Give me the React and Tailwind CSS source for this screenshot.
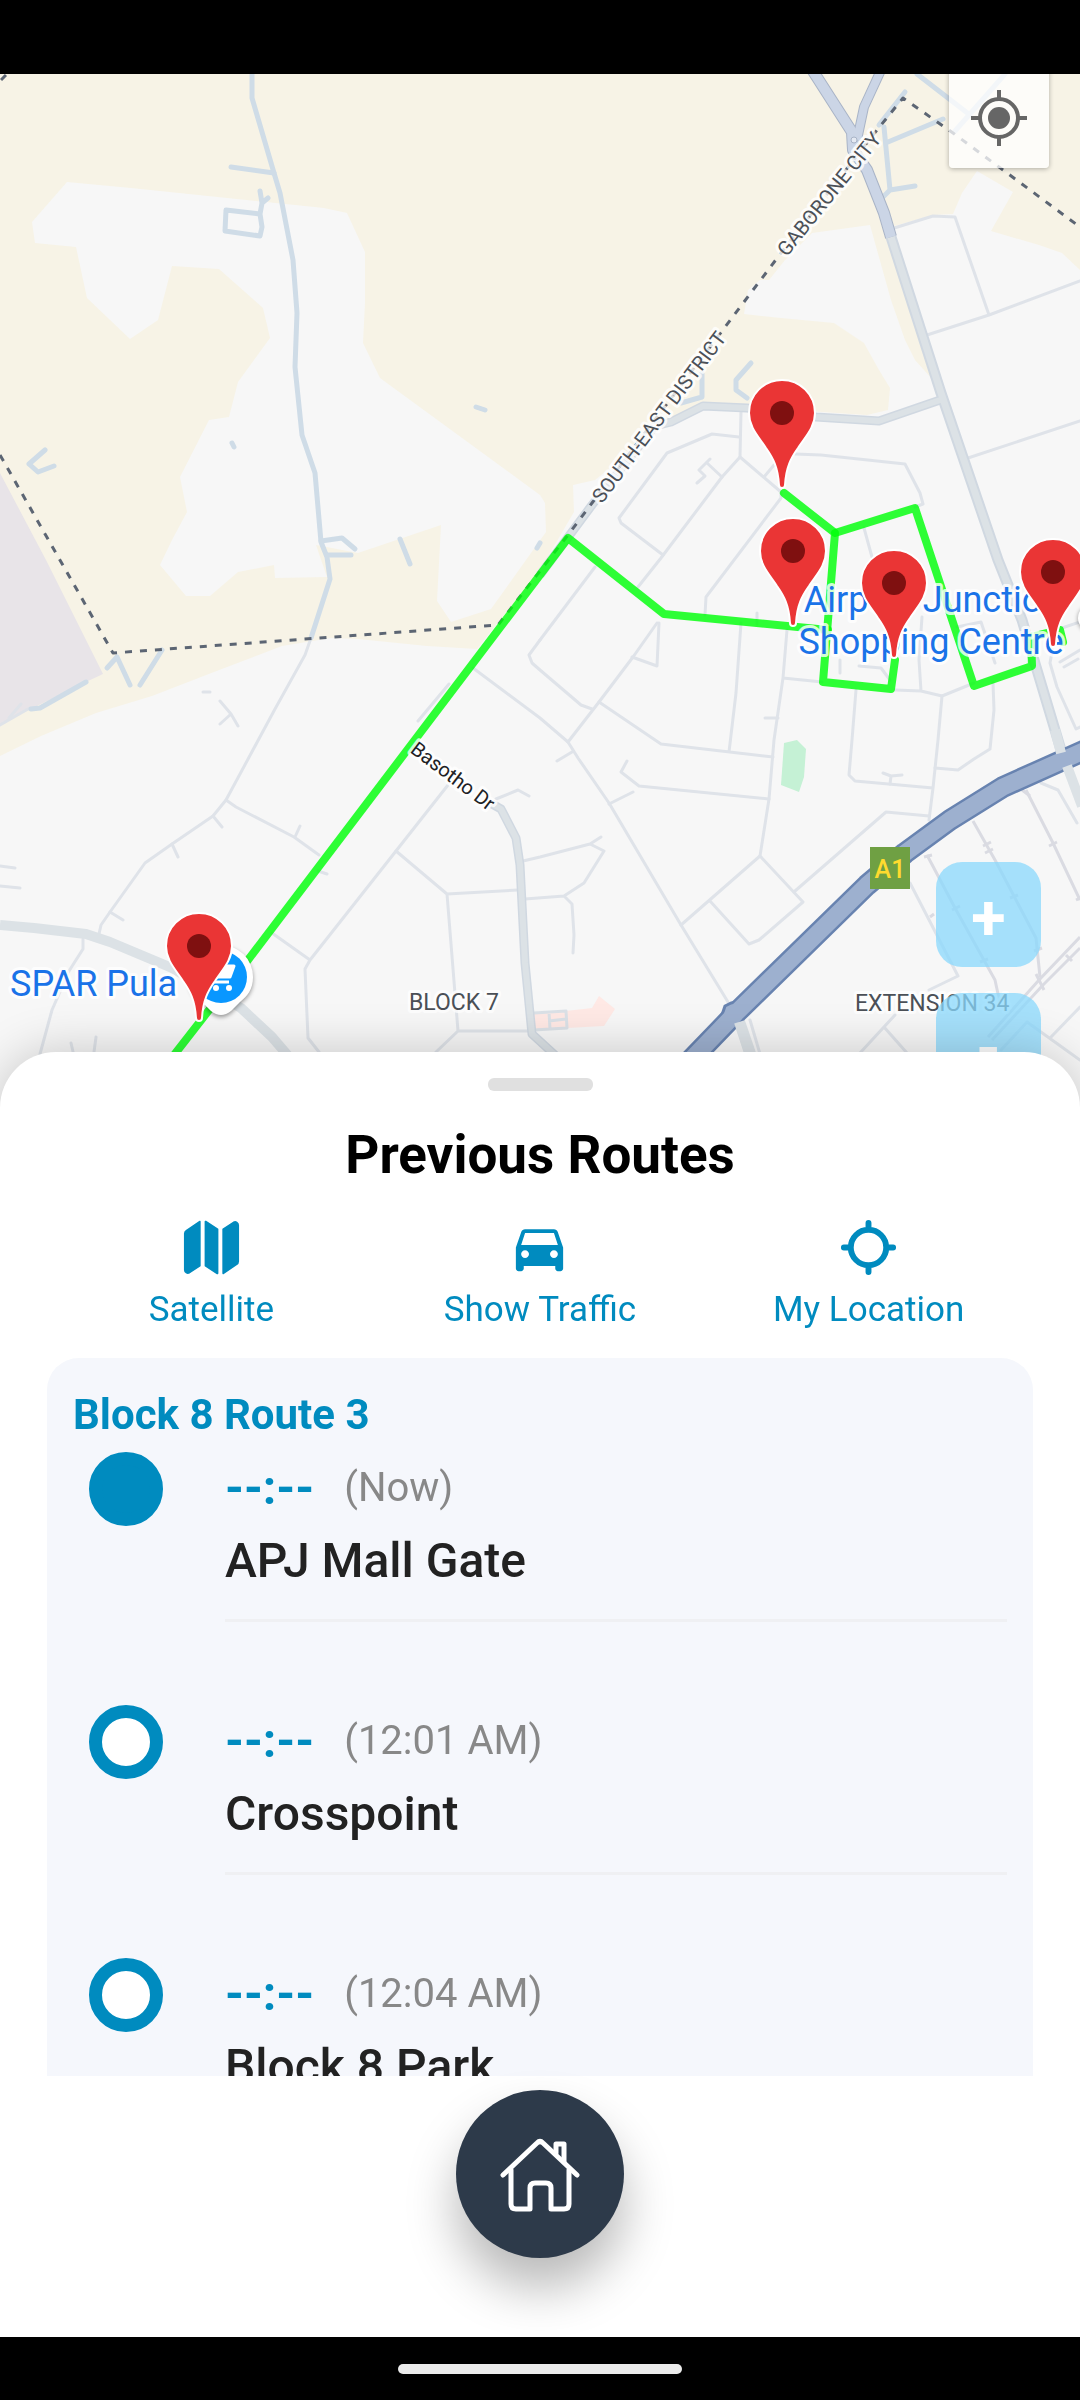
import React, { useState } from "react";
import { IoMap, IoLocate } from "react-icons/io5";
import { MdDirectionsCar } from "react-icons/md";

const stops = [
    { id: 1, name: "APJ Mall Gate", time: "Now", active: true },
    { id: 2, name: "Crosspoint", time: "12:01 AM", active: false },
    { id: 3, name: "Block 8 Park", time: "12:04 AM", active: false },
];

// Tip of each marker on the map
const markers = [
    { x: 782, y: 487 },
    { x: 793, y: 625 },
    { x: 1053, y: 646 },
    { x: 894, y: 657 },
    { x: 199, y: 1020 },
];

const tracks = [
    "M252 70V98L274 173L280 193L293 260L297 313L295 367L302 435L315 473L321 542L327 557L330 579L311 638",
    "M231 167L274 173",
    "M260 191L262 203L260 214L262 227L260 236L225 231L226 210L260 214M268 198L262 203",
    "M476 407L485 410M232 443L234 447M45 450L29 464L38 472L54 466",
    "M321 541L342 538L355 549M327 555H351M400 539L410 564",
    "M107 668L117 657L130 685M162 650L140 685M86 682L40 708L31 709",
    "M905 92L879 125M884 127L890 190L915 186M890 190L883 197M888 142L943 119",
    "M917 74L970 115M1005 74L955 131",
    "M702 373V397L681 403M751 363L736 380V390L747 398",
    "M540 543L537 548",
];

const streets = [
    "M311 638L305 655L275 709L226 800L213 816L172 844L145 863L110 912L101 925L99 934",
    "M226 800L236 807L294 837L319 855M300 826L295 837M213 816L222 827M172 844L178 857M110 912L123 920",
    "M220 701L231 714L238 726M220 724L231 714M203 692H210M0 866L15 868M0 886L20 888M0 725L28 709L40 708M21 704L9 718",
    "M83 939V949L69 971L52 1010L40 1054M71 1043L74 1056M96 1037L94 1052",
    "M448 785L396 851L310 960L305 969L308 1038L319 1052M272 933L310 960",
    "M396 851L447 894L518 890M447 894L458 1031H529M458 1031L436 1052",
    "M473 668L540 718L568 742M540 640L529 655L532 663L540 670L581 705L592 709M449 684L418 721M318 871L327 874",
    "M496 799L518 790L529 796M523 861L540 857L590 844L601 837M590 844L604 851L584 883L564 896L525 899M564 896L572 904L574 935L573 953",
    "M891 229L933 216L955 217L989 315M927 335L989 315L1080 281M968 458L1080 421",
    "M739 437L712 434L667 453L619 518L621 523L663 555",
    "M741 412L740 457L722 477L661 558L638 587M657 623L633 657L599 702L568 742L578 758L609 803L681 925L728 1002L742 1022",
    "M740 457L781 492V498L706 597L705 615M707 463L722 477M710 459L699 470L705 476L697 483M764 477L774 465",
    "M795 454L821 455L905 464L920 493L923 504L915 507M864 528L872 557M595 567L540 640M757 613V624",
    "M659 623L657 666L632 657M599 702L661 744L773 757M741 623L736 693L729 752",
    "M787 630L783 678L774 740L769 799L760 856L803 902L759 940L749 944L710 901M783 678L822 682M765 718H778",
    "M840 660V673M859 666L881 668L890 680M895 690L921 691L942 696L974 683M921 691L919 660L922 617",
    "M856 690L852 740L849 775L855 781L933 788M942 696L938 740L933 788L929 820",
    "M993 683L994 710L990 749L974 759L958 770L935 768M957 627L981 622L995 663",
    "M1050 663L1057 687L1076 729L1080 727M1050 663L1056 630L1080 622M1060 662L1080 650M1064 667L1078 659M1041 783L1058 790L1077 823",
    "M760 856L681 925M795 891L886 812L929 816M883 773L891 776L902 775M891 776L890 784",
    "M627 761L621 772L639 786L769 799M609 804L633 792M557 761L572 752",
    "M910 883L958 976L929 990M895 1015L860 1053M884 1027L907 1053M1080 1007L1051 1037M1001 1050L1027 1022L1080 1060M750 1020L760 1054",
];

const rails = [
    "M1026 790L1053 843L1080 900M1080 937L1039 980L988 1037M1080 948L1043 985L992 1040",
    "M973 821L995 860L1036 938L1040 977M927 855L955 908L995 980L1000 1003",
    "M1049 846L1057 842M983 846L991 842M985 853L993 849M1022 790L1030 796M924 857L932 855M952 910L960 906M930 917L934 914M980 962L988 959M1010 898L1018 895M1034 951L1042 948M1066 955L1072 961M1036 974L1044 990M1076 900L1080 898",
];

const MapMarker = ({ x, y }) => (
    <g transform={`translate(${x} ${y})`}>
        <path
            d="M-3 -2C-4 -20 -9 -29 -16 -39C-24 -51 -33 -60 -33 -74A33 33 0 0 1 33 -74C33 -60 24 -51 16 -39C9 -29 4 -20 3 -2Q3 1 0 1Q-3 1 -3 -2Z"
            fill="#ea3535"
            stroke="#ffffff"
            strokeWidth="2"
        />
        <circle cx="0" cy="-74" r="12" fill="#7f1010" />
    </g>
);

const RouteMap = () => (
    <svg
        className="absolute inset-0 h-full w-full"
        viewBox="0 74 1080 1034"
        preserveAspectRatio="xMidYMin slice"
        role="img"
        aria-label="Route map"
        fill="none"
        strokeLinejoin="round"
    >
        {/* Land */}
        <rect y="70" width="1080" height="1040" fill="#f7f7f7" />
        <path
            fill="#f7f3e6"
            d="M0 70H1080V270L1062 253L1039 245L991 231L1013 192L977 171L962 193L953 214L933 215L891 227L941 385L933 380L915 360L905 340L891 300L870 225L812 233L795 250L785 260L769 280L760 280L748 290L744 314L781 318L834 323L864 343L879 370L890 388L888 410L867 415L747 407L702 403L671 420L595 480L573 485L574 512L540 570L477 649L427 646L358 639L331 638L282 646L214 672L152 696L96 713L41 736L0 756Z"
        />
        <path
            fill="#f7f7f7"
            d="M67 182L131 188L324 208L347 213L365 252V303L363 343L380 378L540 495L545 503L546 532L491 609L451 622L437 601L441 525L358 553L316 545L327 577L275 578L274 565L238 572L210 596H186L160 565L172 540L187 512L180 477L209 420L229 417L238 382L270 338L263 308L219 269L172 266L158 320L130 339L87 298L76 247L35 243L32 222Z"
        />
        <path fill="#e8e4e8" d="M0 473L46 560L103 674L86 682L0 724Z" />
        <path fill="#c5f1d5" d="M784 743L797 740L806 749L804 777L799 792L781 785Z" />
        <path fill="#ffe9e5" d="M534 1013L566 1011L592 1008L599 996L615 1009L604 1026L567 1028L534 1031Z" />
        <path stroke="#dbe1e7" strokeWidth="3" d="M534 1013L566 1011L567 1028L534 1030M549 1012L550 1029M549 1021L566 1019" />

        {/* Small roads */}
        <g stroke="#dfe3e9" strokeWidth="3" strokeLinecap="round">
            {streets.map((d) => <path key={d} d={d} />)}
        </g>
        <g stroke="#dadbe2" strokeWidth="3">
            {rails.map((d) => <path key={d} d={d} />)}
        </g>
        <g stroke="#cfdce7" strokeWidth="5" strokeLinecap="round">
            {tracks.map((d) => <path key={d} d={d} />)}
        </g>

        {/* Main roads */}
        <g stroke="#d0d8e1" strokeWidth="9">
            <path d="M540 575L592 505L655 426L671 422L703 406L747 408L816 417L879 421L943 399" />
            <path d="M492 804L501 809L516 838L520 865L525 963L532 1034L556 1056" />
            <path d="M891 237L941 393L998 560L1022 620L1061 750" strokeWidth="11" />
        </g>
        <g stroke="#dce2e6" strokeWidth="6">
            <path d="M540 575L592 505L655 426L671 422L703 406L747 408L816 417L879 421L943 399" />
            <path d="M492 804L501 809L516 838L520 865L525 963L532 1034L556 1056" />
            <path d="M891 237L941 393L998 560L1022 620L1061 750" strokeWidth="7" />
            <path d="M0 925L34 928L86 934L110 942L172 968L241 1008L272 1037L290 1058" strokeWidth="10" />
            <path d="M739 1020L752 1058" strokeWidth="11" />
        </g>
        <g stroke="#a9b4c7">
            <path d="M811 68L852 132L853 150L867 170L884 213L891 237" strokeWidth="12" />
            <path d="M882 68L864 107L857 140" strokeWidth="10" />
        </g>
        <g stroke="#cbd5e6">
            <path d="M811 68L852 132L853 150L867 170L884 213L891 237" strokeWidth="10" />
            <path d="M882 68L864 107L857 140" strokeWidth="8" />
        </g>
        <circle cx="854" cy="140" r="3" fill="#e4e9f2" stroke="#a9b4c7" />

        {/* A1 highway */}
        <path stroke="#6883b0" strokeWidth="22" d="M1090 748L1003 787L950 820L905 853L867 885L736 1013L660 1092" />
        <path fill="#9db0cf" stroke="#6883b0" strokeWidth="3" d="M721 1018L725 1006L731 1003L744 1001L740 1020Z" />
        <path stroke="#9db0cf" strokeWidth="17" d="M1090 748L1003 787L950 820L905 853L867 885L736 1013L660 1092" />
        <path stroke="#dce2e6" strokeWidth="10" d="M1055 730L1061 753M1067 766L1082 806M739 1022L749 1053" />

        {/* District border */}
        <path
            stroke="#5c6573"
            strokeWidth="3"
            strokeDasharray="7 8"
            d="M0 455L113 653L498 625L568 535L592 503L781 253L877 130L903 98L953 133L1080 227M1 80L6 75"
        />

        {/* Bus route */}
        <g stroke="#00ff0a" strokeOpacity="0.82" strokeWidth="8" strokeLinecap="round">
            <path d="M160 1073L248 960L568 538L664 614L828 630" />
            <path d="M784 493L835 533L823 682L891 689L895 660" />
            <path d="M835 533L915 508L974 686L1032 666L1031 637L1060 630L1063 642" />
        </g>

        {/* Supermarket pin */}
        <path
            d="M221 945A32 32 0 0 1 253 977C253 990 247 996 240 1002L231 1011Q221 1019 211 1011L202 1002C195 996 189 990 189 977A32 32 0 0 1 221 945Z"
            fill="#ffffff"
            className="drop-shadow-[0_2px_2px_rgba(0,0,0,0.4)]"
        />
        <circle cx="221" cy="977" r="26" fill="#0997ff" />
        <path d="M208 966H234L230 977H214ZM209 982H229" stroke="#ffffff" strokeWidth="3" fill="#ffffff" />
        <circle cx="216" cy="988" r="3" fill="#ffffff" />
        <circle cx="229" cy="988" r="3" fill="#ffffff" />
        <circle cx="1091" cy="618" r="13" fill="#ffffff" className="drop-shadow-[0_1px_2px_rgba(0,0,0,0.4)]" />

        {/* Labels */}
        <g
            fill="#4b5057"
            stroke="#ffffff"
            strokeOpacity="0.8"
            strokeWidth="6"
            paintOrder="stroke"
            fontFamily="Roboto, sans-serif"
        >
            <text transform="translate(659 417) rotate(-53)" textAnchor="middle" dominantBaseline="central" fontSize="20">SOUTH-EAST DISTRICT</text>
            <text transform="translate(829 194) rotate(-51)" textAnchor="middle" dominantBaseline="central" fontSize="20">GABORONE CITY</text>
            <text transform="translate(453 776) rotate(37)" textAnchor="middle" dominantBaseline="central" fontSize="20" fill="#202124">Basotho Dr</text>
            <text x="409" y="1010" fontSize="23">BLOCK 7</text>
            <text x="855" y="1011" fontSize="23">EXTENSION 34</text>
            <g fill="#1a73e8" fontSize="36">
                <text x="10" y="996">SPAR Pula</text>
                <text x="933" y="612" textAnchor="middle">Airport Junction</text>
                <text x="931" y="654" textAnchor="middle">Shopping Centre</text>
            </g>
        </g>
        <rect x="870" y="847" width="40" height="42" fill="#6fa043" />
        <text x="890" y="878" textAnchor="middle" fontFamily="Roboto, sans-serif" fontSize="25" fontWeight="500" fill="#ffdb2e">A1</text>

        {markers.map((marker) => (
            <MapMarker key={`${marker.x}-${marker.y}`} x={marker.x} y={marker.y} />
        ))}
    </svg>
);

const HomeIcon = () => (
    <svg
        className="h-20 w-20"
        viewBox="0 0 80 80"
        fill="none"
        stroke="#ffffff"
        strokeWidth="5"
        strokeLinecap="round"
        strokeLinejoin="round"
        aria-hidden="true"
    >
        <path d="M3 41L37 9Q40 6 43 9L77 41" />
        <path d="M11 36V70Q11 75 16 75H30V54Q30 49 35 49H46Q51 49 51 54V75H64Q69 75 69 70V36" />
        <path d="M56 19V10H64V28" />
    </svg>
);

const MapAction = ({ icon: Icon, label, onClick }) => (
    <button type="button" onClick={onClick} className="flex flex-col items-center gap-[10px] text-[#008bbf]">
        <Icon className="h-[63px] w-[63px]" aria-hidden="true" />
        <span className="text-[35px] leading-[42px]">{label}</span>
    </button>
);

const StopRow = ({ stop }) => (
    <li className="mb-[83px] flex items-start gap-[62px] pl-4">
        <span
            className={`h-[74px] w-[74px] shrink-0 rounded-full border-[13px] border-[#008bbf] ${
                stop.active ? "bg-[#008bbf]" : "bg-white"
            }`}
        />
        <div className="min-w-0 flex-1 border-b-[3px] border-[#eff0f3] pt-2 pb-[30px]">
            <p className="flex items-center gap-[30px] leading-[56px]">
                <span className="text-[48px] font-bold text-[#008bbf]">--:--</span>
                <span className="text-[40px] text-[#888888]">({stop.time})</span>
            </p>
            <p className="mt-[17px] text-[48px] leading-[56px] font-medium text-[#222222]">{stop.name}</p>
        </div>
    </li>
);

const App = () => {
    const [satellite, setSatellite] = useState(false);
    const [traffic, setTraffic] = useState(false);

    return (
        <div className="flex h-screen flex-col overflow-hidden bg-white font-[Roboto,sans-serif]">
            <div className="h-[74px] shrink-0 bg-black" />

            <section className="relative -mb-14 min-h-0 flex-1 overflow-hidden">
                <RouteMap />
                <button
                    type="button"
                    aria-label="Center map"
                    className="absolute -top-1.5 right-[31px] flex h-[100px] w-[100px] items-center justify-center rounded-sm bg-white/75 shadow-[0_1px_5px_rgba(0,0,0,0.3)]"
                >
                    <svg className="h-[58px] w-[58px]" viewBox="0 0 58 58" fill="none" stroke="#666666" strokeWidth="4" aria-hidden="true">
                        <circle cx="29" cy="29" r="19" />
                        <circle cx="29" cy="29" r="11" fill="#666666" stroke="none" />
                        <path d="M29 1V10M29 48V57M1 29H10M48 29H57" />
                    </svg>
                </button>
                <div className="absolute top-[788px] right-[39px] flex flex-col gap-[26px] text-[63px] font-bold text-white">
                    <button type="button" aria-label="Zoom in" className="flex h-[105px] w-[105px] items-center justify-center rounded-[26px] bg-[#89d8fc]/75 pt-2">
                        +
                    </button>
                    <button type="button" aria-label="Zoom out" className="flex h-[105px] w-[105px] items-center justify-center rounded-[26px] bg-[#89d8fc]/75 pt-2">
                        -
                    </button>
                </div>
            </section>

            <main className="relative shrink-0 rounded-t-[56px] bg-white px-[47px] pt-[26px] shadow-[0_0_50px_rgba(0,0,0,0.2)]">
                <div className="mx-auto h-[13px] w-[105px] rounded-md bg-[#e0e0e0]" />
                <h1 className="mt-[33px] text-center text-[53px] leading-[62px] font-bold text-black">Previous Routes</h1>

                <div className="mt-[30px] grid grid-cols-3">
                    <MapAction icon={IoMap} label="Satellite" onClick={() => setSatellite(!satellite)} />
                    <MapAction icon={MdDirectionsCar} label="Show Traffic" onClick={() => setTraffic(!traffic)} />
                    <MapAction icon={IoLocate} label="My Location" />
                </div>

                <div className="mt-[27px] h-[718px] overflow-y-auto rounded-t-[32px] bg-[#f5f7fc] px-[26px] pt-8 [scrollbar-width:none]">
                    <h2 className="mb-[13px] text-[42px] leading-[49px] font-bold text-[#008bbf]">Block 8 Route 3</h2>
                    <ul>
                        {stops.map((stop) => (
                            <StopRow key={stop.id} stop={stop} />
                        ))}
                    </ul>
                </div>

                <nav className="flex justify-center pt-[14px] pb-[79px]">
                    <a
                        href="#home"
                        aria-label="Home"
                        className="flex h-[168px] w-[168px] items-center justify-center rounded-full bg-[#2d3a4a] shadow-[0_30px_50px_rgba(0,0,0,0.28)]"
                    >
                        <HomeIcon />
                    </a>
                </nav>
            </main>

            <footer className="relative flex h-[63px] shrink-0 items-center justify-center bg-black">
                <div className="h-[10px] w-[284px] rounded-full bg-[#ebebeb]" />
            </footer>
        </div>
    );
};

export default App;
